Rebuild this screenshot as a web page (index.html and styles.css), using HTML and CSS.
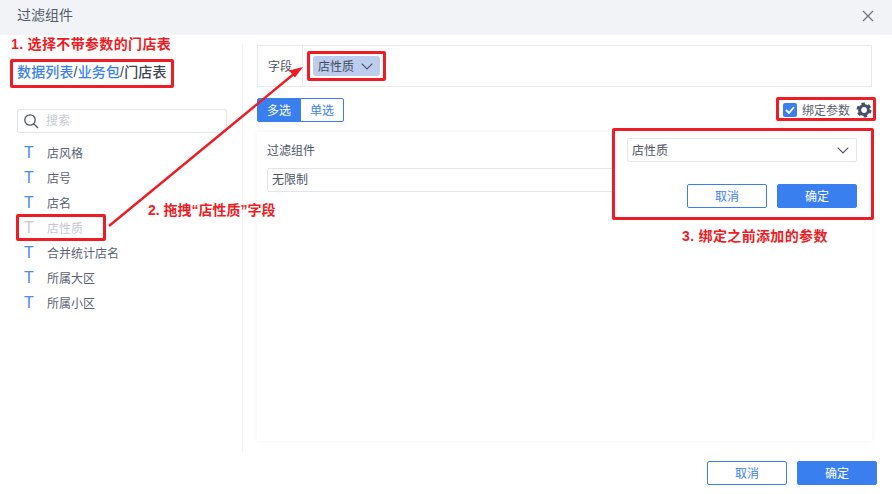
FILE: index.html
```html
<!DOCTYPE html>
<html lang="zh-CN">
<head>
    <meta charset="UTF-8">
    <title>过滤组件</title>
    <link rel="stylesheet" href="styles.css">
</head>
<body>
    <div class="dialog">
        <header class="dialog-head">
            <span class="dialog-title">过滤组件</span>
            <svg class="close-icon" width="12" height="12" viewBox="0 0 12 12"><path d="M1 1l10 10M11 1L1 11"/></svg>
        </header>

        <div class="dialog-body">
            <aside class="side">
                <div class="crumb"><a>数据列表</a>/<a>业务包</a>/门店表</div>
                <div class="search">
                    <svg width="16" height="16" viewBox="0 0 16 16"><circle cx="7" cy="7" r="5.2"/><path d="M11 11l4 4"/></svg>
                    <span>搜索</span>
                </div>
                <ul class="fields">
                    <li><b>T</b>店风格</li>
                    <li><b>T</b>店号</li>
                    <li><b>T</b>店名</li>
                    <li class="dragging"><b>T</b>店性质</li>
                    <li><b>T</b>合并统计店名</li>
                    <li><b>T</b>所属大区</li>
                    <li><b>T</b>所属小区</li>
                </ul>
            </aside>

            <main class="main">
                <div class="field-row">
                    <div class="field-label">字段</div>
                    <div class="field-drop">
                        <div class="tag">
                            <span class="raised">店性质</span>
                            <svg class="chevron" width="12" height="7" viewBox="0 0 12 7"><path d="M.7.7L6 6l5.3-5.3"/></svg>
                        </div>
                    </div>
                </div>

                <div class="mode-row">
                    <div class="tabs">
                        <span class="tab active">多选</span>
                        <span class="tab">单选</span>
                    </div>
                    <div class="bind">
                        <span class="check">
                            <svg width="10" height="8" viewBox="0 0 10 8"><path d="M1 4l3 3 5-6"/></svg>
                        </span>
                        <span class="raised">绑定参数</span>
                        <svg class="gear" width="16" height="16" viewBox="0 0 16 16">
                            <circle class="gear-ring" cx="8" cy="8" r="4.400"/>
                            <circle class="gear-teeth" cx="8" cy="8" r="6.300"/>
                        </svg>
                    </div>
                </div>

                <section class="panel">
                    <div class="panel-title">过滤组件</div>
                    <div class="panel-input">无限制</div>
                </section>
            </main>
        </div>

        <footer class="dialog-foot">
            <button class="btn">取消</button>
            <button class="btn primary">确定</button>
        </footer>
    </div>

    <!-- bind param popup -->
    <div class="popup">
        <div class="popup-select">
            <span class="raised">店性质</span>
            <svg class="chevron" width="12" height="7" viewBox="0 0 12 7"><path d="M.7.7L6 6l5.3-5.3"/></svg>
        </div>
        <div class="popup-btns">
            <button class="btn">取消</button>
            <button class="btn primary">确定</button>
        </div>
    </div>

    <!-- red annotations drawn over the screenshot -->
    <div class="note note-1">1. 选择不带参数的门店表</div>
    <div class="note note-2">2. 拖拽“店性质”字段</div>
    <div class="note note-3">3. 绑定之前添加的参数</div>
    <div class="mark mark-crumb"></div>
    <div class="mark mark-field"></div>
    <div class="mark mark-tag"></div>
    <div class="mark mark-bind"></div>
    <div class="mark mark-popup"></div>
    <svg class="arrow" width="892" height="494" viewBox="0 0 892 494">
        <path class="arrow-line" d="M109 226L295 73"/>
        <path class="arrow-head" d="M303 67l-14 3.500 6 7z"/>
    </svg>
</body>
</html>
```

FILE: styles.css
```css
* {
    box-sizing: border-box;
}

html, body {
    margin: 0;
    height: 100%;
}

body {
    width: 892px;
    height: 494px;
    overflow: hidden;
    position: relative;
    background-color: #fff;
    color: #4d5566;
    font-family: "Liberation Sans", "Noto Sans CJK SC", sans-serif;
    font-size: 12px;
}

.dialog {
    display: flex;
    flex-direction: column;
    height: 100%;
}

/* nudges CJK glyphs up, the font sits low in its line box */
.raised {
    padding-bottom: 2px;
}

/* Header */
.dialog-head {
    flex: none;
    height: 35px;
    padding: 0 18px 4px 17px;
    display: flex;
    align-items: center;
    justify-content: space-between;
    background-color: #f1f3f7;
    font-size: 14px;
    color: #535b6b;
}

.dialog-title {
    padding-bottom: 4px;
}

.close-icon path {
    stroke: #6a7386;
    stroke-width: 1.2;
    fill: none;
}

/* Body */
.dialog-body {
    flex: none;
    height: 417px;
    padding-top: 9px;
    display: flex;
}

.side {
    width: 243px;
    height: 408px;
    padding: 0 15px 0 17px;
    border-right: 1px solid #f1f2f4;
}

.crumb {
    margin-top: 18px;
    height: 20px;
    line-height: 20px;
    font-size: 14px;
    font-weight: 500;
    letter-spacing: 0.15px;
    color: #3d4454;
    white-space: nowrap;
}

.crumb a {
    color: #3a7ff0;
}

.search {
    margin-top: 27px;
    height: 24px;
    padding-left: 5px;
    display: flex;
    align-items: center;
    gap: 7px;
    border: 1px solid #e3e5ea;
    border-radius: 2px;
    color: #c6cad2;
}

.search span {
    padding-bottom: 4px;
}

.search svg {
    fill: none;
    stroke: #4d5566;
    stroke-width: 1.3;
}

.fields {
    list-style: none;
    margin: 7px 0 0;
    padding: 0;
}

.fields li {
    height: 25px;
    display: flex;
    align-items: center;
    color: #5a6273;
}

.fields b {
    width: 30px;
    padding-left: 7px;
    font-size: 16px;
    font-weight: normal;
    color: #4a8af4;
}

.fields .dragging,
.fields .dragging b {
    color: #c4c8d0;
}

/* Main column */
.main {
    width: 615px;
    margin-left: 14px;
}

.field-row {
    height: 42px;
    margin-top: 1px;
    display: flex;
    border: 1px solid #e8e9ec;
}

.field-label {
    width: 45px;
    padding-left: 10px;
    line-height: 42px;
    border-right: 1px solid #e8e9ec;
}

.field-drop {
    flex: 1;
    padding: 10px 0 0 10px;
}

.tag {
    width: 67px;
    height: 20px;
    padding-left: 5px;
    display: flex;
    align-items: center;
    gap: 7px;
    border-radius: 3px;
    background-color: #bdcdee;
    color: #444c5c;
}

.chevron path {
    fill: none;
    stroke: #4d5566;
    stroke-width: 1.2;
}

.mode-row {
    height: 24px;
    margin-top: 11px;
    display: flex;
    justify-content: space-between;
    align-items: center;
}

.tabs {
    display: flex;
}

.tab {
    width: 44px;
    height: 24px;
    line-height: 24px;
    text-align: center;
    color: #3a7ff0;
    border: 1px solid #3a7ff0;
    border-radius: 0 2px 2px 0;
    margin-left: -1px;
}

.tab.active {
    margin-left: 0;
    color: #fff;
    background-color: #3a7ff0;
    border-radius: 2px 0 0 2px;
}

.bind {
    display: flex;
    align-items: center;
    margin-right: 0;
    color: #5a6273;
}

.check {
    width: 14px;
    height: 14px;
    margin-right: 5px;
    display: flex;
    align-items: center;
    justify-content: center;
    border-radius: 2px;
    background-color: #3a7ff0;
}

.check path {
    fill: none;
    stroke: #fff;
    stroke-width: 1.8;
}

.gear {
    margin-left: 6px;
    fill: none;
    stroke: #47516a;
}

.gear-ring {
    stroke-width: 3;
}

.gear-teeth {
    stroke-width: 2.400;
    stroke-dasharray: 3.400 3.200;
}

.panel {
    height: 309px;
    margin-top: 10px;
    padding: 10px;
    box-shadow: 0 0 6px rgba(0, 0, 0, 0.05);
}

.panel-title {
    height: 18px;
    line-height: 18px;
}

.panel-input {
    width: 360px;
    height: 24px;
    margin-top: 8px;
    padding-left: 4px;
    line-height: 22px;
    border: 1px solid #e3e5ea;
    border-radius: 2px;
}

/* Footer */
.dialog-foot {
    flex: none;
    height: 42px;
    padding: 9px 15px 0 0;
    display: flex;
    justify-content: flex-end;
    gap: 10px;
}

.btn {
    width: 80px;
    height: 24px;
    padding: 0 0 2px;
    border: 1px solid #3a7ff0;
    border-radius: 2px;
    background-color: #fff;
    color: #3a7ff0;
    font: inherit;
}

.btn.primary {
    background-color: #3a7ff0;
    color: #fff;
}

/* Popup */
.popup {
    position: absolute;
    left: 613px;
    top: 128px;
    width: 258px;
    height: 90px;
    padding: 10px 14px 0;
    background-color: #fff;
}

.popup-select {
    height: 24px;
    padding: 0 7px 0 4px;
    display: flex;
    align-items: center;
    justify-content: space-between;
    border: 1px solid #e3e5ea;
    border-radius: 2px;
}

.popup-btns {
    margin-top: 22px;
    display: flex;
    justify-content: flex-end;
    gap: 10px;
}

/* Annotations */
.note {
    position: absolute;
    color: #ee1c25;
    font-size: 14px;
    font-weight: bold;
    line-height: 18px;
    white-space: nowrap;
}

.note-1 {
    left: 11px;
    top: 35px;
    letter-spacing: 0.35px;
}

.note-2 {
    left: 148px;
    top: 201px;
}

.note-3 {
    left: 682px;
    top: 227px;
    letter-spacing: 0.35px;
}

.mark {
    position: absolute;
    border: 3px solid #ee1c25;
    border-radius: 2px;
}

.mark-crumb {
    left: 10px;
    top: 59px;
    width: 164px;
    height: 29px;
}

.mark-field {
    left: 16px;
    top: 214px;
    width: 90px;
    height: 27px;
}

.mark-tag {
    left: 307px;
    top: 51px;
    width: 79px;
    height: 30px;
}

.mark-bind {
    left: 776px;
    top: 97px;
    width: 100px;
    height: 24px;
}

.mark-popup {
    left: 612px;
    top: 128px;
    width: 262px;
    height: 92px;
}

.arrow {
    position: absolute;
    left: 0;
    top: 0;
    pointer-events: none;
}

.arrow-line {
    stroke: #ee1c25;
    stroke-width: 2.400;
    fill: none;
}

.arrow-head {
    fill: #ee1c25;
}
```
